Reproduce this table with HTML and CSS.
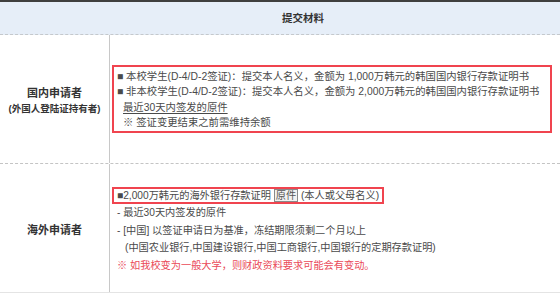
FILE: index.html
```html
<!DOCTYPE html>
<html lang="zh-CN">
<head>
<meta charset="utf-8">
<link rel="stylesheet" href="styles.css">
</head>
<body>
<div class="table">
  <div class="head">提交材料</div>
  <div class="row row-first">
    <div class="label">
      <div class="label-main">国内申请者</div>
      <div class="label-sub">(外国人登陆证持有者)</div>
    </div>
    <div class="cell cell-first">
      <div class="redbox box1">
        <div class="line">■ 本校学生(D-4/D-2签证)：提交本人名义，金额为 1,000万韩元的韩国国内银行存款证明书</div>
        <div class="line">■ 非本校学生(D-4/D-2签证)：提交本人名义，金额为 2,000万韩元的韩国国内银行存款证明书</div>
        <div class="line indent"><span class="uline">最近30天内签发的原件</span></div>
        <div class="line indent">※ 签证变更结束之前需维持余额</div>
      </div>
    </div>
  </div>
  <div class="row row-last">
    <div class="label">
      <div class="label-main">海外申请者</div>
    </div>
    <div class="cell cell-last">
      <div class="redbox box2">■2,000万韩元的海外银行存款证明 <span class="tag">原件</span> (本人或父母名义)</div>
      <div class="line2">- 最近30天内签发的原件</div>
      <div class="line2">- [中国] 以签证申请日为基准，冻结期限须剩二个月以上</div>
      <div class="line2 indent2">(中国农业银行,中国建设银行,中国工商银行,中国银行的定期存款证明)</div>
      <div class="line2 red">※ 如我校变为一般大学，则财政资料要求可能会有变动。</div>
    </div>
  </div>
</div>
</body>
</html>
```
FILE: styles.css
```css
html, body {
  margin: 0;
  padding: 0;
  background: #ffffff;
}
body {
  width: 560px;
  height: 297px;
  overflow: hidden;
  font-family: "Liberation Sans", "Noto Sans CJK SC", sans-serif;
  color: #4a4a4a;
}
.table {
  width: 560px;
}
.head {
  border-top: 2px solid #3f3f3f;
  background: #e6eef8;
  height: 32px;
  line-height: 32px;
  border-bottom: 1px dashed #c4c8cc;
  padding-left: 282px;
  font-size: 10.5px;
  font-weight: bold;
  color: #333333;
}
.row {
  display: grid;
  grid-template-columns: 110px 1fr;
  height: 128px;
}
.row-first {
  border-bottom: 1px dashed #c4c4c4;
}
.row-last {
  height: 128px;
  border-bottom: 1px solid #e4e4e4;
}
.label {
  border-right: 1px solid #c8c8c8;
  display: flex;
  flex-direction: column;
  align-items: center;
  justify-content: center;
  font-weight: bold;
  color: #333333;
  padding-top: 4px;
}
.label-main {
  font-size: 11px;
  line-height: 16px;
}
.label-sub {
  font-size: 9.5px;
  line-height: 16px;
}
.cell {
  display: flex;
  flex-direction: column;
  justify-content: center;
  align-items: flex-start;
  padding-left: 2px;
}
.cell-first {
  font-size: 10.35px;
}
.cell-last {
  font-size: 10.2px;
  padding-bottom: 3px;
}
.redbox {
  border: 2px solid #f0444f;
}
.box1 {
  width: 430px;
  padding: 2px 3px 1px 3px;
}
.line {
  line-height: 15.3px;
  white-space: nowrap;
}
.indent {
  padding-left: 6px;
}
.uline {
  text-decoration: underline;
  text-underline-offset: 2px;
}
.box2 {
  padding: 0 3px;
  line-height: 13px;
  white-space: nowrap;
  margin-top: 8px;
}
.tag {
  border: 1px solid #8a8a8a;
  background: #f2f2f2;
  padding: 0 1px;
  color: #555555;
}
.line2 {
  padding-left: 5px;
  line-height: 17.5px;
  white-space: nowrap;
}
.indent2 {
  padding-left: 13px;
}
.red {
  color: #ea4a58;
}
```
